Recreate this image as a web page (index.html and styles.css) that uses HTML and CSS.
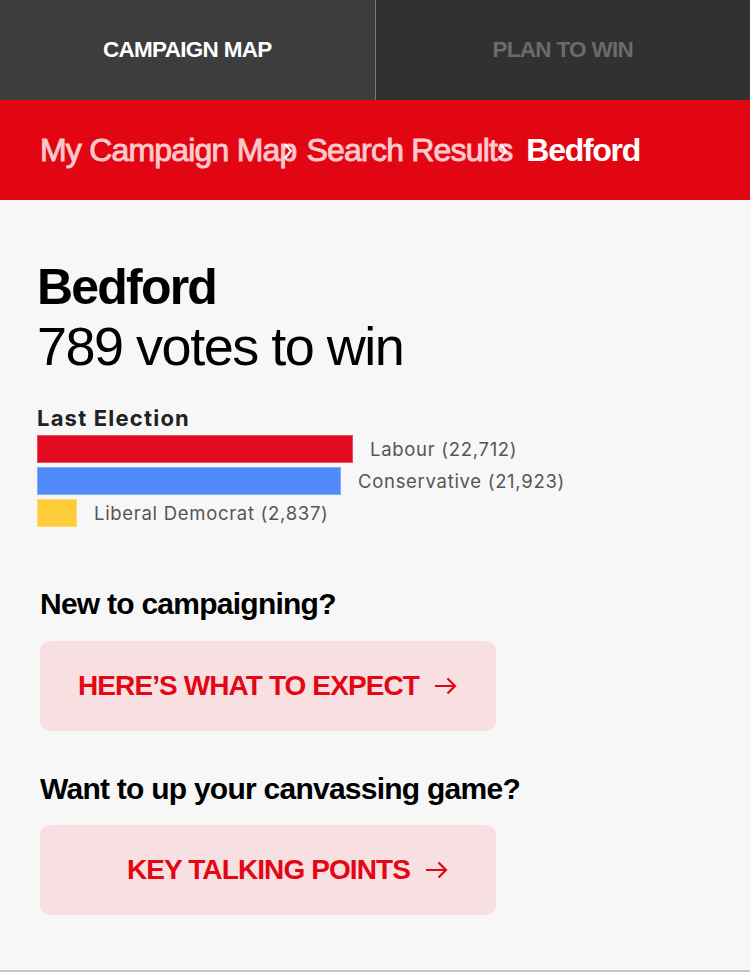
FILE: index.html
```html
<!DOCTYPE html>
<html lang="en">
<head>
<meta charset="utf-8">
<title>Bedford</title>
<link rel="stylesheet" href="styles.css">
</head>
<body>
<div class="app">
  <nav class="tabs">
    <div class="tab tab--active">CAMPAIGN MAP</div>
    <div class="tab">PLAN TO WIN</div>
  </nav>
  <div class="crumbs">
    <span class="crumb">My Campaign Map<svg class="chev" width="10" height="18" viewBox="0 0 10 18"><path d="M2 2L8 9L2 16" fill="none" stroke="#fff" stroke-width="2.2"/></svg></span>
    <span class="crumb">Search Results<svg class="chev" width="10" height="18" viewBox="0 0 10 18"><path d="M2 2L8 9L2 16" fill="none" stroke="#fff" stroke-width="2.2"/></svg></span>
    <span class="crumb crumb--current">Bedford</span>
  </div>
  <main class="content">
    <h1 class="title">Bedford</h1>
    <p class="subtitle">789 votes to win</p>
    <h2 class="chart-title">Last Election</h2>
    <div class="chart">
      <div class="row"><div class="bar bar--lab" style="width:316px"></div><span class="label">Labour (22,712)</span></div>
      <div class="row"><div class="bar bar--con" style="width:304px"></div><span class="label">Conservative (21,923)</span></div>
      <div class="row"><div class="bar bar--ld" style="width:40px"></div><span class="label">Liberal Democrat (2,837)</span></div>
    </div>
    <section class="cta">
      <h3 class="cta-heading">New to campaigning?</h3>
      <a class="btn">HERE’S WHAT TO EXPECT
        <svg class="arrow" width="24" height="18" viewBox="0 0 24 18"><path d="M1 9H21M13.5 1.5L21 9L13.5 16.5" fill="none" stroke="currentColor" stroke-width="2.2"/></svg>
      </a>
      <h3 class="cta-heading cta-heading--second">Want to up your canvassing game?</h3>
      <a class="btn btn--shift">KEY TALKING POINTS
        <svg class="arrow" width="24" height="18" viewBox="0 0 24 18"><path d="M1 9H21M13.5 1.5L21 9L13.5 16.5" fill="none" stroke="currentColor" stroke-width="2.2"/></svg>
      </a>
    </section>
  </main>
</div>
</body>
</html>
```
FILE: styles.css
```css
* { box-sizing: border-box; }
html, body { margin: 0; padding: 0; }
body {
  background: #f7f7f7;
  font-family: "Liberation Sans", Arial, sans-serif;
  color: #000;
}
.app {
  min-height: 972px;
  display: flex;
  flex-direction: column;
  border-bottom: 2px solid #c6c6c6;
}
.tabs {
  display: flex;
  height: 100px;
}
.tab {
  flex: 1;
  display: flex;
  align-items: center;
  justify-content: center;
  background: #313131;
  color: #6b6b6b;
  font-weight: 700;
  font-size: 22.5px;
  letter-spacing: -0.7px;
}
.tab--active {
  background: #3d3d3d;
  color: #fff;
  border-right: 1px solid #7a7a7a;
}
.crumbs {
  height: 100px;
  background: #e20613;
  display: flex;
  align-items: center;
  padding-left: 40px;
  gap: 10px;
}
.crumb {
  position: relative;
  color: #fbc8cc;
  font-size: 32px;
  letter-spacing: -0.8px;
  -webkit-text-stroke: 0.9px #fbc8cc;
}
.crumb--current {
  color: #fff;
  font-weight: 700;
  letter-spacing: -1.3px;
  -webkit-text-stroke: 0;
  margin-left: 4px;
}
.chev {
  position: absolute;
  right: 4px;
  top: 50%;
  margin-top: -8px;
}
.content {
  flex: 1;
  padding: 62px 37px 0;
}
.title {
  margin: 0;
  font-size: 50px;
  line-height: 50px;
  font-weight: 700;
  letter-spacing: -1.8px;
}
.subtitle {
  margin: 7px 0 0;
  font-size: 54px;
  line-height: 54px;
  font-weight: 400;
  letter-spacing: -1.5px;
}
.chart-title {
  margin: 33px 0 0;
  font-family: Inter, "Noto Sans", sans-serif;
  font-size: 22px;
  line-height: 24px;
  font-weight: 700;
  letter-spacing: 1.2px;
  color: #222;
}
.chart {
  margin-top: 5px;
  display: flex;
  flex-direction: column;
  gap: 4px;
}
.row {
  display: flex;
  align-items: center;
  gap: 17px;
  height: 28px;
}
.bar {
  height: 28px;
  box-shadow: inset 0 0 0 1px rgba(255, 255, 255, 0.28);
}
.bar--lab { background: #e20a20; }
.bar--con { background: #508bf9; }
.bar--ld { background: #fecb3a; }
.label {
  font-family: Inter, "Noto Sans", sans-serif;
  font-size: 18.5px;
  letter-spacing: 0.7px;
  color: #555;
}
.cta {
  margin-top: 59px;
  padding-left: 3px;
}
.cta-heading {
  margin: 0;
  font-size: 30px;
  line-height: 36px;
  font-weight: 700;
  letter-spacing: -0.75px;
}
.cta-heading--second { margin-top: 40px; }
.btn {
  margin-top: 19px;
  width: 456px;
  height: 90px;
  border-radius: 10px;
  background: #f7dfe2;
  color: #e30613;
  display: flex;
  align-items: center;
  justify-content: center;
  gap: 15px;
  font-size: 28px;
  font-weight: 700;
  letter-spacing: -0.9px;
  text-decoration: none;
}
.btn--shift { padding-left: 40px; margin-top: 18px; }
.arrow { flex: none; }
```
